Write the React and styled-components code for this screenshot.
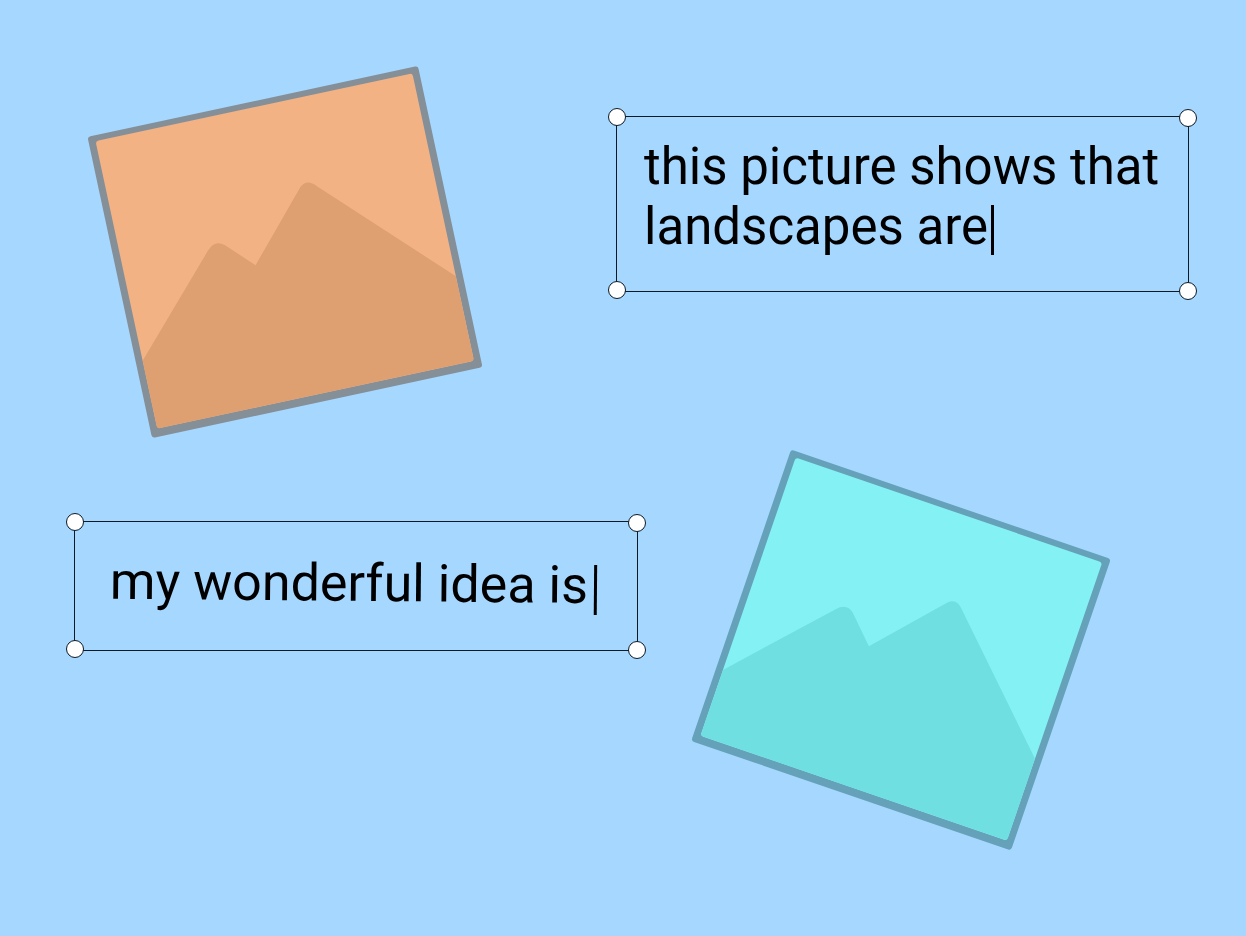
import React from 'react';
import styled, { createGlobalStyle, css } from 'styled-components';

const GlobalStyle = createGlobalStyle`
  *, *::before, *::after { box-sizing: border-box; }
  body { margin: 0; background: #a6d7ff; }
`;

const Canvas = styled.main`
  position: relative;
  min-height: 100vh;
  overflow: hidden;
  background: #a6d7ff;
  font-family: Roboto, 'Liberation Sans', sans-serif;
  color: #000;
`;

const Picture = styled.figure`
  position: absolute;
  left: ${({ $x }) => $x}px;
  top: ${({ $y }) => $y}px;
  display: flex;
  width: 338px;
  height: 308px;
  margin: 0;
  padding: 6px 7px 8px;
  border-radius: 3px;
  background: ${({ $frame }) => $frame};
  transform: rotate(${({ $angle }) => $angle}deg);
`;

const Scene = styled.svg`
  flex: 1;
  border-radius: 3px;
  background: ${({ $sky }) => $sky};
`;

const TextFrame = styled.section`
  position: absolute;
  left: ${({ $x }) => $x}px;
  top: ${({ $y }) => $y}px;
  width: ${({ $w }) => $w}px;
  height: ${({ $h }) => $h}px;
  padding: ${({ $padding }) => $padding};
  border: 1px solid #0c1a26;
`;

const Line = styled.div`
  position: relative;
  display: flex;
  align-items: center;
  transform: rotate(${({ $angle = 0 }) => $angle}deg);
`;

const fieldText = css`
  margin: 0;
  padding: 0;
  border: 0;
  outline: 0;
  background: transparent;
  color: inherit;
  font-family: inherit;
  line-height: 60px;
`;

const TextArea = styled.textarea`
  ${fieldText}
  flex: 1;
  height: 120px;
  font-size: 51px;
  resize: none;
  overflow: hidden;
`;

const TextInput = styled.input`
  ${fieldText}
  field-sizing: content;
  height: 60px;
  font-size: 52px;
`;

const Caret = styled.span`
  width: 3px;
  height: 50px;
  background: #000;
`;

const InlineCaret = styled(Caret)`
  margin: 8px 0 0 6px;
`;

const OverlayCaret = styled(Caret)`
  position: absolute;
  left: 347px;
  top: 68px;
`;

const corners = {
  nw: 'left: -9px; top: -9px;',
  ne: 'right: -9px; top: -8px;',
  sw: 'left: -9px; bottom: -8px;',
  se: 'right: -9px; bottom: -9px;',
};

const Handle = styled.button`
  position: absolute;
  ${({ $corner }) => corners[$corner]}
  width: 18px;
  height: 18px;
  padding: 0;
  border: 1px solid #0c1a26;
  border-radius: 50%;
  background: #fff;
`;

const handleNames = {
  nw: 'Resize top left',
  ne: 'Resize top right',
  sw: 'Resize bottom left',
  se: 'Resize bottom right',
};

function Handles() {
  return Object.keys(corners).map((corner) => (
    <Handle key={corner} type="button" $corner={corner} aria-label={handleNames[corner]} />
  ));
}

function Landscape({ x, y, angle, frame, sky, hills }) {
  return (
    <Picture $x={x} $y={y} $angle={angle} $frame={frame}>
      <Scene $sky={sky} viewBox="7 6 324 294" aria-hidden="true">
        <path
          fill={hills}
          d="M7 230.5 L94 136.5 Q103 127 111.5 134.5 L137.4 160.8 L197.5 94 Q205.5 86.5 214 96.5 L331 213.5 V300 H7 Z"
        />
      </Scene>
    </Picture>
  );
}

export default function App() {
  return (
    <>
      <GlobalStyle />
      <Canvas>
        <Landscape x={116} y={98} angle={-12.1} frame="#858f98" sky="#f3b284" hills="#de9f71" />
        <Landscape x={732} y={496} angle={18.9} frame="#65a2b9" sky="#84f2f4" hills="#70dfe1" />

        <TextFrame $x={616} $y={116} $w={573} $h={176} $padding="20px 0 0 27px">
          <Line>
            <TextArea aria-label="Picture caption" defaultValue={'this picture shows that\nlandscapes are'} spellCheck={false} />
            <OverlayCaret />
          </Line>
          <Handles />
        </TextFrame>

        <TextFrame $x={74} $y={521} $w={564} $h={130} $padding="32px 0 0 35px">
          <Line $angle={0.5}>
            <TextInput aria-label="Idea" defaultValue="my wonderful idea is" spellCheck={false} />
            <InlineCaret />
          </Line>
          <Handles />
        </TextFrame>
      </Canvas>
    </>
  );
}
